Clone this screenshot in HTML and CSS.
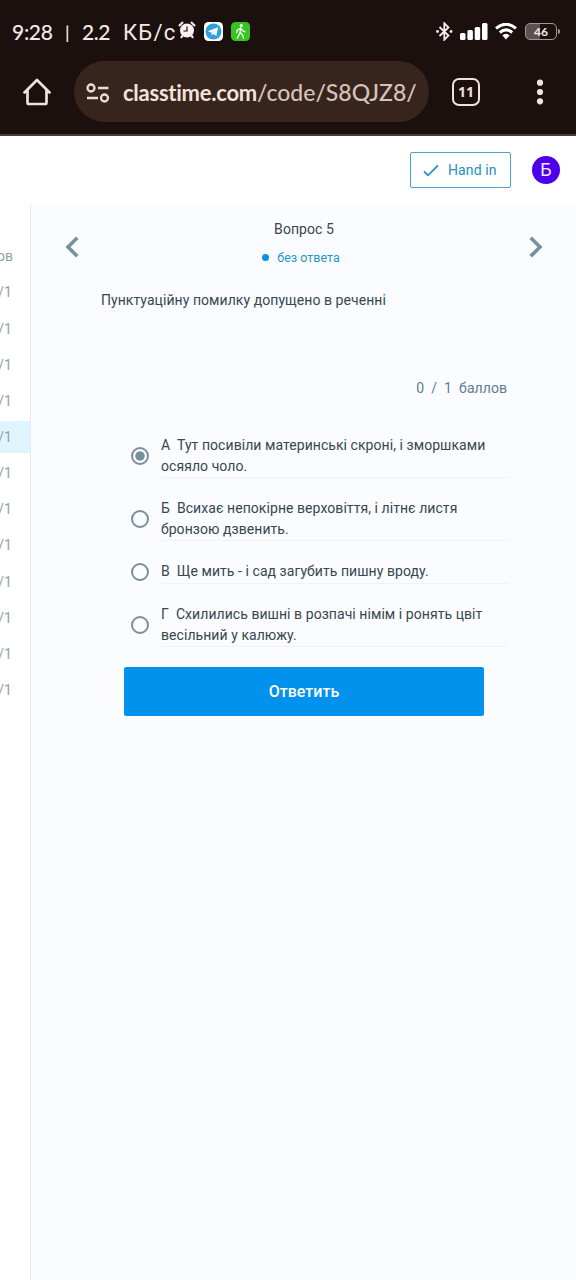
FILE: index.html
```html
<!DOCTYPE html>
<html lang="ru">
<head>
<meta charset="utf-8">
<title>Classtime</title>
<link rel="stylesheet" href="styles.css">
</head>
<body>
<div class="browser">
  <div class="status">
    <span class="clock">9:28</span><span class="bar">|</span><span class="rate">2.2</span><span class="unit">КБ/с</span>
    <svg class="alarm" width="18" height="18" viewBox="0 0 18 18"><path d="M1 5 5 1M17 5 13 1M4.5 14.5 3 17M13.5 14.5 15 17" stroke="#f4eeee" stroke-width="2.2"/><circle cx="9" cy="9.5" r="7" fill="#f8f4f4"/><path d="M9 5.5V10H5.5" fill="none" stroke="#1c100e" stroke-width="1.2"/></svg>
    <svg class="telegram" width="19" height="19" viewBox="0 0 19 19"><rect width="19" height="19" rx="4.5" fill="#fff"/><circle cx="9.500" cy="9.500" r="8" fill="#30a0dc"/><path d="M3.800 9.300 14 5.300 12.300 14 9.300 11.900 7.800 13.300 7.500 10.700Z" fill="#fff"/><path d="M7.500 10.700 12 7.200 8.600 11.300Z" fill="#b8daf0"/></svg>
    <svg class="walk" width="19" height="19" viewBox="0 0 19 19"><rect width="19" height="19" rx="4.500" fill="#36c41f"/><circle cx="10.300" cy="3.500" r="1.600" fill="#fff"/><path d="M9.700 6 8.900 11 6.200 16.300M9.300 10.500 11.700 13 12.500 16.300M9.500 6.200 6.300 8.200 5.700 10.500M10 6.300 11.500 8.700 14 9.800" fill="none" stroke="#fff" stroke-width="1.300" stroke-linecap="round"/></svg>
    <svg class="bluetooth" width="17" height="19" viewBox="0 0 17 19"><path d="M3.500 5 12.500 13.500 8.300 17.800V1.200L12.500 5.500 3.500 14" fill="none" stroke="#f4eeee" stroke-width="1.800"/><circle cx="1.500" cy="9.500" r="1.400" fill="#f4eeee"/><circle cx="15" cy="9.500" r="1.400" fill="#f4eeee"/></svg>
    <svg class="signal" width="28" height="17" viewBox="0 0 28 17" fill="#fff"><rect y="10" width="5.500" height="7" rx="1.500"/><rect x="7.400" y="7" width="5.500" height="10" rx="1.500"/><rect x="14.700" y="4" width="5.500" height="13" rx="1.500"/><rect x="22" width="5.500" height="17" rx="1.500"/></svg>
    <svg class="wifi" width="22" height="17" viewBox="0 0 22 17"><path d="M1 5.300Q11-2.800 21 5.300M4.800 9.500Q11 4.300 17.200 9.500" fill="none" stroke="#fff" stroke-width="3"/><path d="M7.300 12.300Q11 9.300 14.700 12.300L11 16.500Z" fill="#fff"/></svg>
    <div class="battery"><span>46</span></div>
    <i class="nub"></i>
  </div>
  <div class="toolbar">
    <svg class="home" width="28" height="28" viewBox="0 0 28 28"><path d="M1.500 14.500 14 2 26.500 14.500M4.500 12V24.500Q4.500 26 6 26H22Q23.500 26 23.500 24.500V12" fill="none" stroke="#f0e2de" stroke-width="2.700" stroke-linejoin="round" stroke-linecap="round"/></svg>
    <div class="omnibox">
      <svg class="tune" width="24" height="20" viewBox="0 0 24 20" fill="none" stroke="#ecdcd6" stroke-width="2.300"><circle cx="5" cy="5" r="3.500"/><path d="M12 5H22.500M1 15H12"/><circle cx="18.500" cy="15" r="3.500"/></svg>
      <div class="url"><b>classtime.com</b><span class="path">/code/S8QJZ8/</span></div>
    </div>
    <div class="tabs">11</div>
    <svg class="more" width="8" height="26" viewBox="0 0 8 26" fill="#f0e2de"><circle cx="4" cy="3.700" r="3.100"/><circle cx="4" cy="13" r="3.100"/><circle cx="4" cy="22.300" r="3.100"/></svg>
  </div>
</div>
<header class="header">
  <button class="handin"><svg width="16" height="13" viewBox="0 0 16 13"><path d="M1 7.300 5 11.300 15 1.300" fill="none" stroke="#1f8ec4" stroke-width="1.700"/></svg><span>Hand in</span></button>
  <div class="avatar">Б</div>
</header>
<div class="body">
  <aside class="side">
    <div class="row head"><span>ов</span></div>
    <div class="row"><span>/1</span></div><div class="row"><span>/1</span></div><div class="row"><span>/1</span></div><div class="row"><span>/1</span></div>
    <div class="row active"><span>/1</span></div>
    <div class="row"><span>/1</span></div><div class="row"><span>/1</span></div><div class="row"><span>/1</span></div><div class="row"><span>/1</span></div><div class="row"><span>/1</span></div><div class="row"><span>/1</span></div><div class="row"><span>/1</span></div>
  </aside>
  <main class="main">
    <div class="nav">
      <svg width="14" height="22" viewBox="0 0 14 22"><path d="M12.300 1.700 3 11 12.300 20.300" fill="none" stroke="#78909c" stroke-width="3.600"/></svg>
      <div class="titles"><div class="title"><span>Вопрос 5</span></div><div class="state"><i></i><span>без ответа</span></div></div>
      <svg width="14" height="22" viewBox="0 0 14 22"><path d="M1.700 1.700 11 11 1.700 20.300" fill="none" stroke="#78909c" stroke-width="3.600"/></svg>
    </div>
    <p class="question"><span>Пунктуаційну помилку допущено в реченні</span></p>
    <p class="points"><span>0 &nbsp;/ &nbsp;1 &nbsp;баллов</span></p>
    <div class="options">
      <div class="option"><i class="radio on"></i><p><span>А&nbsp; Тут посивіли материнські скроні, і зморшками</span><br><span>осяяло чоло.</span></p></div>
      <div class="option"><i class="radio"></i><p><span>Б&nbsp; Всихає непокірне верховіття, і літнє листя</span><br><span>бронзою дзвенить.</span></p></div>
      <div class="option"><i class="radio"></i><p><span>В&nbsp; Ще мить - і сад загубить пишну вроду.</span></p></div>
      <div class="option"><i class="radio"></i><p><span>Г&nbsp; Схилились вишні в розпачі німім і ронять цвіт</span><br><span>весільний у калюжу.</span></p></div>
    </div>
    <button class="answer"><span>Ответить</span></button>
  </main>
</div>
</body>
</html>
```
FILE: styles.css
```css
* { box-sizing: border-box; }
body { margin: 0; width: 576px; height: 1280px; overflow: hidden; display: flex; flex-direction: column; background: #fff; font-family: Roboto, sans-serif; color: #37474f; }
p { margin: 0; }
svg { display: block; flex: none; }
button { font-family: inherit; }
.browser { height: 136px; flex: none; background: #1c100e; border-bottom: 2px solid #453b39; }
.status { height: 61px; display: flex; align-items: center; padding: 2px 16px 0 12px; color: #f2e9e8; font: 500 21px/24px Lato, sans-serif; white-space: nowrap; }
.clock { width: 53px; letter-spacing: -0.3px; }
.bar { width: 17px; font-size: 18px; }
.rate { width: 41px; letter-spacing: -0.4px; }
.unit { width: 55px; font: 400 22px/24px Roboto, sans-serif; letter-spacing: 1.200px; padding-top: 2px; }
.alarm { margin-top: -3px; }
.telegram { margin-left: 8px; }
.walk { margin-left: 8px; }
.bluetooth { margin-left: auto; }
.signal { margin-left: 7px; }
.wifi { margin-left: 7px; }
.battery { width: 32px; height: 17px; margin-left: 8px; border: 1.500px solid #a09897; border-radius: 5px; background: linear-gradient(90deg, #5c5351 46%, transparent 46%); display: grid; place-items: center; font: 700 12px/14px Lato, sans-serif; }
.nub { width: 2px; height: 5px; margin-left: 1px; border-radius: 0 2px 2px 0; background: #a09897; }
.toolbar { height: 61px; display: flex; align-items: center; padding: 0 32px 0 23px; }
.omnibox { width: 355px; height: 61px; margin-left: 23px; border-radius: 31px; background: #37241d; display: flex; align-items: center; padding: 2px 10px 0 12px; }
.url { width: 296px; margin-left: 13px; white-space: nowrap; font: 500 23px/32px Lato, sans-serif; color: #d8c2ba; letter-spacing: 0; }
.url b { color: #f2e2dc; font-size: 22px; letter-spacing: -0.250px; }
.tabs { width: 28px; height: 28px; margin-left: 23px; border: 2.500px solid #f0e2de; border-radius: 7px; color: #f0e2de; display: grid; place-items: center; font: 700 14px/16px "Noto Sans", sans-serif; }
.more { margin-left: auto; }
.header { height: 69px; flex: none; display: flex; justify-content: flex-end; align-items: flex-start; padding: 16px 16px 0 0; }
.handin { width: 101px; height: 36px; padding: 0 0 0 12px; display: flex; align-items: center; border: 1px solid #4aa3cc; border-radius: 2px; background: #fff; color: #2590c0; font-size: 14px; letter-spacing: 0.1px; }
.handin span { margin-left: 9px; }
.avatar { width: 28px; height: 28px; margin: 4px 0 0 21px; border-radius: 50%; background: #4e00e8; color: #f5e9ff; display: grid; place-items: center; font-size: 18px; line-height: 28px; }
.body { flex: 1; display: flex; }
.side { width: 31px; border-right: 1px solid #e8ebed; padding-top: 35.200px; }
.row { height: 32px; margin-bottom: 4.170px; display: flex; align-items: center; justify-content: flex-end; padding-right: 18px; font-size: 14px; color: #90a0a8; }
.row.head { padding-right: 17px; }
.row.active { background: #e0f4fe; }
.main { flex: 1; background: #fafcff; padding: 0 33px; letter-spacing: 0.060px; }
.nav { height: 74px; padding-top: 14px; display: flex; justify-content: space-between; }
.nav > svg { margin-top: 17px; }
.nav > svg:first-child { margin-left: 1px; }
.titles { display: flex; flex-direction: column; align-items: center; font-size: 14px; }
.title { height: 20px; line-height: 20px; }
.state { display: flex; align-items: center; margin-top: 8px; height: 20px; font-size: 12.500px; letter-spacing: 0; color: #2596c8; margin-left: -6px; }
.state i { width: 7px; height: 7px; border-radius: 50%; background: #0a90e4; margin-right: 8px; }
.question { height: 43px; padding: 11px 0 0 37px; font-size: 14px; line-height: 21px; }
.points { margin-top: 56px; padding-right: 36px; text-align: right; font-size: 14px; line-height: 21px; color: #607d8b; }
.options { margin: 35.500px 35px 0 67px; display: flex; flex-direction: column; gap: 20.300px; }
.option { display: flex; align-items: center; gap: 12px; }
.option p { flex: 1; border-bottom: 1px solid #f0f2f4; font-size: 14px; line-height: 21.100px; white-space: nowrap; }
.radio { width: 18px; height: 18px; margin-bottom: 1.200px; border: 2px solid #78909c; border-radius: 50%; flex: none; }
.radio.on { background: radial-gradient(circle, #78909c 4.300px, transparent 5px); }
.answer { display: block; width: 360px; height: 49px; padding: 0; margin: 20px 0 0 60px; border: 0; border-radius: 2px; background: #0291ec; color: #fff; font-size: 16px; font-weight: 500; }
```
